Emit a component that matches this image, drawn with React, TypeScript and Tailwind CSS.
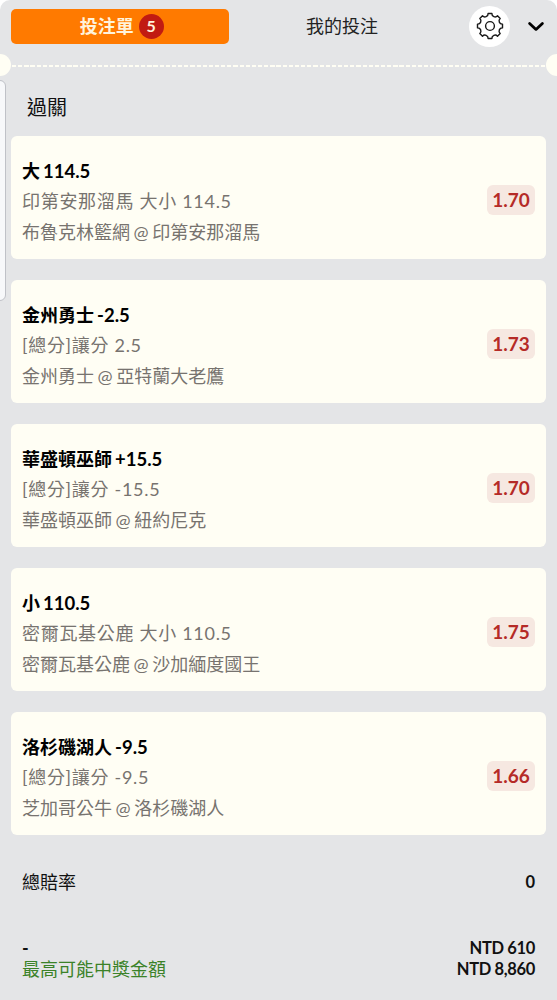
interface Bet {
  pick: string;
  line: string;
  market: string;
  match: string;
  odds: string;
}

const bets: Bet[] = [
  { pick: "大", line: "114.5", market: "印第安那溜馬 大小 114.5", match: "布魯克林籃網 @ 印第安那溜馬", odds: "1.70" },
  { pick: "金州勇士", line: "-2.5", market: "[總分]讓分 2.5", match: "金州勇士 @ 亞特蘭大老鷹", odds: "1.73" },
  { pick: "華盛頓巫師", line: "+15.5", market: "[總分]讓分 -15.5", match: "華盛頓巫師 @ 紐約尼克", odds: "1.70" },
  { pick: "小", line: "110.5", market: "密爾瓦基公鹿 大小 110.5", match: "密爾瓦基公鹿 @ 沙加緬度國王", odds: "1.75" },
  { pick: "洛杉磯湖人", line: "-9.5", market: "[總分]讓分 -9.5", match: "芝加哥公牛 @ 洛杉磯湖人", odds: "1.66" },
];

// Eight teeth joined by scalloped valleys
const gearPath =
  Array.from({ length: 8 }, (_, i) => {
    const a = (i * Math.PI) / 4;
    const corner = (side: number) =>
      `${(12.5 * Math.sin(a) + side * Math.cos(a)).toFixed(2)} ${(-12.5 * Math.cos(a) + side * Math.sin(a)).toFixed(2)}`;
    return `${i === 0 ? "M" : "A3.2 3.2 0 0 0 "}${corner(-1.9)}L${corner(1.9)}`;
  }).join("") + "A3.2 3.2 0 0 0 -1.9 -12.5Z";

function GearIcon() {
  return (
    <svg
      viewBox="-14 -14 28 28"
      className="h-7 w-7"
      fill="none"
      stroke="#181818"
      strokeWidth="1.4"
      strokeLinejoin="round"
    >
      <path d={gearPath} />
      <circle r="4.4" />
    </svg>
  );
}

function ChevronIcon() {
  return (
    <svg
      viewBox="0 0 22 22"
      className="h-[22px] w-[22px]"
      fill="none"
      stroke="#000"
      strokeWidth="2.8"
      strokeLinecap="round"
      strokeLinejoin="round"
    >
      <path d="M4.6 8.4L11 14.4L17.4 8.4" />
    </svg>
  );
}

function Header() {
  return (
    <div className="flex h-[52px] items-center pl-[11px] pr-[10px]">
      <button className="flex h-[35px] w-[217.5px] items-center justify-center gap-[5px] rounded-[5px] bg-[#ff7a00] pl-1 text-[18px] font-bold text-[#fff3dc]">
        投注單
        <span className="flex h-[25px] w-[25px] items-center justify-center rounded-full bg-[#c11b12] text-[16px]">
          5
        </span>
      </button>
      <button className="w-[227px] text-center text-[18px] text-[#222]">我的投注</button>
      <div className="ml-auto flex items-center gap-[15px]">
        <button className="flex h-[41px] w-[41px] items-center justify-center rounded-full bg-white">
          <GearIcon />
        </button>
        <ChevronIcon />
      </div>
    </div>
  );
}

// Ticket style perforation with a notch at each end
function Perforation() {
  return (
    <div className="flex h-[22px] items-center justify-between overflow-hidden">
      <div className="-ml-[11px] h-[22px] w-[22px] shrink-0 rounded-full bg-[#fffef4]" />
      <div className="mx-px mt-[2px] h-[2px] flex-1 bg-[repeating-linear-gradient(90deg,#fffef4_0_4.2px,transparent_4.2px_6.15px)]" />
      <div className="-mr-[11px] h-[22px] w-[22px] shrink-0 rounded-full bg-[#fffef4]" />
    </div>
  );
}

function BetCard({ bet }: { bet: Bet }) {
  return (
    <div className="flex h-[123px] items-center justify-between rounded-[6px] bg-[#fffef4] px-[11px]">
      <div className="whitespace-nowrap pt-[10px] text-[18px]">
        <p className="flex h-[29px] items-baseline gap-[3px] font-bold leading-[29px] text-black">
          <span>{bet.pick}</span>
          <span className="text-[18.5px]">{bet.line}</span>
        </p>
        <p className="h-[30px] leading-[30px] tracking-[0.7px] text-[#77736f]">{bet.market}</p>
        <p className="h-[32px] leading-[32px] [word-spacing:-1px] text-[#77736f]">{bet.match}</p>
      </div>
      <span className="mt-[5px] flex h-[30px] w-12 items-center justify-center rounded-[6px] bg-[#f6e8e1] text-[19px] font-bold text-[#b52b27]">
        {bet.odds}
      </span>
    </div>
  );
}

export default function App() {
  return (
    <div className="relative h-[1000px] w-[557px] overflow-hidden bg-white font-[Lato,'Noto_Sans_CJK_TC',sans-serif]">
      <div className="flex h-full flex-col rounded-t-[10px] bg-[#e4e5e7]">
        <Header />
        <div className="mt-[2px]">
          <Perforation />
        </div>
        <h2 className="mt-[15px] h-[45px] pl-[27px] text-[20px] leading-[32px] text-[#111]">過關</h2>

        <div className="flex flex-col gap-[21px] px-[11px]">
          {bets.map((bet) => (
            <BetCard key={bet.match} bet={bet} />
          ))}
        </div>

        <div className="mt-[34px] flex h-[27px] items-center justify-between px-[22px] text-[18px] text-[#111]">
          <span>總賠率</span>
          <span className="text-[16.5px] font-bold">0</span>
        </div>

        <div className="mt-[41px] px-[22px] text-[18px] leading-[22px]">
          <div className="flex justify-between font-bold text-[#111]">
            <span>-</span>
            <span className="text-[16.5px] tracking-[-0.35px]">NTD 610</span>
          </div>
          <div className="-mt-px flex justify-between">
            <span className="text-[#3b8228]">最高可能中獎金額</span>
            <span className="text-[16.5px] font-bold tracking-[-0.35px] text-[#111]">NTD 8,860</span>
          </div>
        </div>
      </div>

      {/* Edge handle of the panel behind */}
      <div className="absolute left-[-10px] top-20 h-[221px] w-4 rounded-[6px] border border-[#bfc1c7] bg-[#f7f8fa]" />
    </div>
  );
}
